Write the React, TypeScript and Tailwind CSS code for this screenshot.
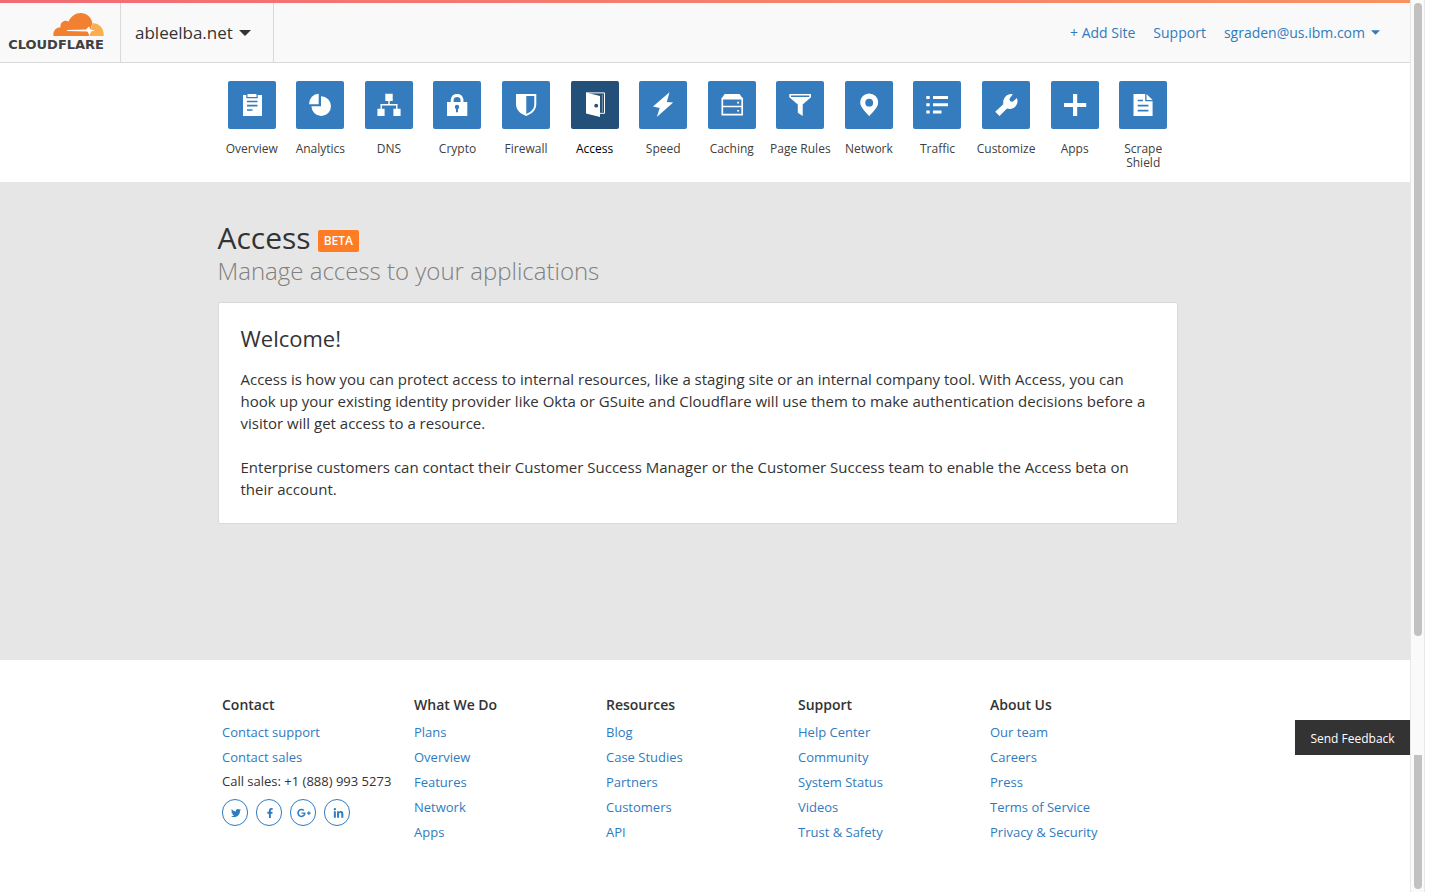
import type { ReactNode } from "react";
import { FaFacebookF, FaGooglePlusG, FaLinkedinIn, FaTwitter } from "react-icons/fa";

const BLUE = "#347cbd";

function Caret({ className }: { className: string }) {
  return (
    <svg viewBox="0 0 12 6" className={className} aria-hidden="true">
      <path d="M0 0h12L6 6z" fill="currentColor" />
    </svg>
  );
}

function Logo() {
  return (
    <a href="#home" aria-label="Cloudflare home" className="flex w-[104px] flex-col items-end text-[#404041]">
      <svg viewBox="0 0 51 23" className="h-[23px] w-[51px]" aria-hidden="true">
        <path
          d="M0.5 23C-0.3 18 3 14.3 7.6 14.2C6.6 9.8 11.4 6 15.6 8.6C18 3 22.6 0 27.6 0C34 0 38.6 4.5 39.4 10.3C37.8 15 36.6 20 35.6 23Z"
          fill="#f18030"
        />
        <path d="M36 23L39.6 10.3C46 9.8 51.4 15.6 50.6 23Z" fill="#fbad50" />
        <path
          d="M14 17.1L33 16.6L36.2 13.2L37.2 16.4L42 17.6L38 18.6L36.6 22.6L34.4 18.6L14 17.9Z"
          fill="#fff"
        />
      </svg>
      <span className="pt-0.5 font-['DejaVu_Sans',sans-serif] text-[13px] leading-[14px] font-bold">CLOUDFLARE</span>
    </a>
  );
}

type NavItem = { label: string; icon: ReactNode; active?: boolean };

const NAV: NavItem[] = [
  {
    label: "Overview",
    icon: (
      <>
        <path d="M15 14h19v21H15z" />
        <path d="M18.3 12.5h11.4v4.8H18.3z" fill={BLUE} />
        <path d="M19.5 13h9v3h-9z" />
        <path d="M19 20.500h10.5M19 24.600h10.5M19 29h5.5" stroke={BLUE} strokeWidth="1.700" />
      </>
    ),
  },
  {
    label: "Analytics",
    icon: (
      <>
        <path d="M22.7 23.2H13a9.7 10.5 0 0 1 9.7-10.5z" />
        <path d="M25 15.3a9.8 9.8 0 1 1-9.6 10H25z" />
      </>
    ),
  },
  {
    label: "DNS",
    icon: (
      <>
        <path d="M20.3 12.8h7.4V20h-7.4zM12.4 27.7h7.2V35h-7.2zM28.4 27.7h7.2V35h-7.2z" />
        <path d="M24 20v4M16.2 28v-4.2h15.6V28" fill="none" stroke="#fff" strokeWidth="1.4" />
      </>
    ),
  },
  {
    label: "Crypto",
    icon: (
      <>
        <path d="M14 21h20.3v14H14z" />
        <path d="M19.2 21.5v-3a5 5 0 0 1 9.8 0v3" fill="none" stroke="#fff" strokeWidth="2.9" />
        <circle cx="24" cy="26" r="2.2" fill={BLUE} />
        <path d="M23 26h2v5.2h-2z" fill={BLUE} />
      </>
    ),
  },
  {
    label: "Firewall",
    icon: (
      <>
        <path d="M14 13h20.3v10c0 6.500-4.500 9.700-10.100 12C18.500 32.700 14 29.500 14 23z" />
        <path d="M24.300 14.900h8V23c0 5.200-3.300 7.700-8 9.900z" fill={BLUE} />
      </>
    ),
  },
  {
    label: "Access",
    active: true,
    icon: (
      <>
        <path d="M15 11.500l14 3.600V36l-14-3.600z" />
        <path d="M15 11.900h18.500v20.400H29" fill="none" stroke="#fff" strokeWidth="1" />
        <path d="M31.400 13.500v17.500" stroke="#8fa9bf" strokeWidth="0.800" />
        <circle cx="25.200" cy="24.700" r="1.900" fill="#225079" />
      </>
    ),
  },
  {
    label: "Speed",
    icon: <path d="M30.500 11.300L14 25.500l6.700 1.500L17.800 36 34.200 21.600l-6.400-.7z" />,
  },
  {
    label: "Caching",
    icon: (
      <>
        <path d="M16.600 13h15l3 4.500h-21z" />
        <path d="M14.300 17.600h19.900v16H14.300zM14.300 25.500h19.900" fill="none" stroke="#fff" strokeWidth="1.700" />
        <path d="M29.200 20.800h1.900v1.700h-1.900zM29.200 28.900h1.900v1.700h-1.900z" />
      </>
    ),
  },
  {
    label: "Page Rules",
    icon: (
      <>
        <path d="M13.300 13H35v3.200l-8.300 7.300V35l-4.900-3.300v-8.200l-8.500-7.300z" />
        <path d="M15 14.500h18.300v1.500H15z" fill={BLUE} />
      </>
    ),
  },
  {
    label: "Network",
    icon: (
      <>
        <path d="M24.200 35.200C20.600 30.600 15.200 26.200 15.200 21.400a9 9 0 0 1 18 0c0 4.800-5.400 9.200-9 13.800z" />
        <circle cx="24.200" cy="21.700" r="3.900" fill={BLUE} />
      </>
    ),
  },
  {
    label: "Traffic",
    icon: (
      <path d="M13.300 14.900h3.400V18h-3.400zM13.300 22.200h3.400v3.100h-3.400zM13.300 29.500h3.400v3.100h-3.400zM20 14.900h15V18H20zM20 22.200h15v3.100H20zM20 29.500h8.500v3.100H20z" />
    ),
  },
  {
    label: "Customize",
    icon: (
      <path d="M30.800 13.300L27.500 17.700L28 20.200L30.700 20.700L34.900 17C36.500 20.400 35 25 31.500 27C29 28.400 26.700 28.200 25 27.600L17.500 35L13.200 30.800L21.300 23.200C20.300 18 24.800 12 30.800 13.300Z" />
    ),
  },
  { label: "Apps", icon: <path d="M22 13h4.200v8.900h9v4.200h-9v9H22v-9h-9v-4.200h9z" /> },
  {
    label: "Scrape Shield",
    icon: (
      <>
        <path d="M14.500 13h11.700v7.200h7.400V35H14.500zM27.500 13l6.100 6.100h-6.100z" />
        <path d="M18.700 19.500H24M18.700 24.600h10.700M18.700 29.600h10.700" stroke={BLUE} strokeWidth="1.700" />
      </>
    ),
  },
];

const FOOTER = [
  { title: "Contact", links: ["Contact support", "Contact sales"] },
  { title: "What We Do", links: ["Plans", "Overview", "Features", "Network", "Apps"] },
  { title: "Resources", links: ["Blog", "Case Studies", "Partners", "Customers", "API"] },
  { title: "Support", links: ["Help Center", "Community", "System Status", "Videos", "Trust & Safety"] },
  { title: "About Us", links: ["Our team", "Careers", "Press", "Terms of Service", "Privacy & Security"] },
];

const SOCIAL = [
  { name: "Twitter", icon: <FaTwitter size={10} /> },
  { name: "Facebook", icon: <FaFacebookF size={10} /> },
  { name: "Google Plus", icon: <FaGooglePlusG size={14} /> },
  { name: "LinkedIn", icon: <FaLinkedinIn size={11} /> },
];

function Header() {
  return (
    <header>
      <div className="h-[3px] bg-linear-to-r from-[#f16b75] to-[#f79261]" />
      <div className="flex h-[60px] items-stretch border-b border-[#d9d9d9] bg-[#f9f9f9] pr-[30px]">
        <div className="flex w-[121px] items-start border-r border-[#d9d9d9] pt-2.5">
          <Logo />
        </div>
        <button type="button" className="flex items-center gap-1.5 border-r border-[#d9d9d9] pr-[22px] pl-3.5 text-[17px] text-[#333]">
          ableelba.net
          <Caret className="h-1.5 w-3" />
        </button>
        <div className="ml-auto flex items-center gap-[18px] text-sm text-[#2f7bbf]">
          <a href="#add-site">+ Add Site</a>
          <a href="#support">Support</a>
          <button type="button" className="flex items-center gap-1.5">
            sgraden@us.ibm.com
            <Caret className="h-[5px] w-[9px]" />
          </button>
        </div>
      </div>
    </header>
  );
}

function Navigation() {
  return (
    <nav aria-label="Site settings" className="pr-[15px]">
      <ul className="mx-auto grid max-w-[960px] grid-cols-14 pt-[18px] pb-3">
        {NAV.map((item) => (
          <li key={item.label}>
            <a
              href={"#" + item.label.toLowerCase().replace(" ", "-")}
              aria-current={item.active ? "page" : undefined}
              className={
                "flex flex-col items-center gap-[13px] text-center text-xs leading-[14px] " +
                (item.active ? "text-black" : "text-[#404040]")
              }
            >
              <svg
                viewBox="0 0 48 48"
                fill="#fff"
                aria-hidden="true"
                className={"size-12 rounded-xs " + (item.active ? "bg-[#225079]" : "bg-[#347cbd]")}
              >
                {item.icon}
              </svg>
              <span className={item.label === "Page Rules" ? "whitespace-nowrap" : ""}>{item.label}</span>
            </a>
          </li>
        ))}
      </ul>
    </nav>
  );
}

function AccessPage() {
  return (
    <main className="min-h-[478px] bg-[#e6e6e6] pr-[15px]">
      <div className="mx-auto max-w-[960px] pt-[38px]">
        <div className="flex items-center gap-[7px]">
          <h1 className="text-[30px] leading-9 text-[#333]">Access</h1>
          <span className="mt-1.5 rounded-xs bg-[#ff7b24] px-1.5 text-xs leading-[22px] font-semibold text-white">BETA</span>
        </div>
        <p className="text-2xl leading-[30px] font-light text-[#808080]">Manage access to your applications</p>
        <section className="mt-4 rounded-xs border border-[#dadada] bg-white px-[22px] pt-[21px] pb-[23px] text-[15px] leading-[22px] text-[#333]">
          <h2 className="mb-4 text-[22px] leading-7">Welcome!</h2>
          <p>
            Access is how you can protect access to internal resources, like a staging site or an internal company tool.
            With Access, you can hook up your existing identity provider like Okta or GSuite and Cloudflare will use them
            to make authentication decisions before a visitor will get access to a resource.
          </p>
          <p className="mt-[22px]">
            Enterprise customers can contact their Customer Success Manager or the Customer Success team to enable the
            Access beta on their account.
          </p>
        </section>
      </div>
    </main>
  );
}

function Footer() {
  return (
    <footer className="pr-3.5 text-[13px] text-[#2f7bbf]">
      <div className="mx-auto grid max-w-[960px] grid-cols-5 pt-[35px]">
        {FOOTER.map((column) => (
          <section key={column.title} className="pl-1">
            <h3 className="mb-[5px] text-sm leading-5 font-semibold text-[#333]">{column.title}</h3>
            <ul className="leading-[25px]">
              {column.links.map((link) => (
                <li key={link}>
                  <a href={"#" + link.toLowerCase().replaceAll(" ", "-")}>{link}</a>
                </li>
              ))}
            </ul>
            {column.title === "Contact" && (
              <>
                <p className="mb-[7px] leading-[22px] whitespace-nowrap text-[#333]">Call sales: +1 (888) 993 5273</p>
                <div className="flex gap-2">
                  {SOCIAL.map((network) => (
                    <a
                      key={network.name}
                      href={"#" + network.name.toLowerCase().replace(" ", "-")}
                      aria-label={network.name}
                      className="flex h-[27px] w-[26px] items-center justify-center rounded-full border border-[#2f7bbf] pt-px pl-0.5"
                    >
                      {network.icon}
                    </a>
                  ))}
                </div>
              </>
            )}
          </section>
        ))}
      </div>
    </footer>
  );
}

export default function App() {
  return (
    <div className="flex min-h-screen bg-white pr-1.5 font-['Open_Sans',sans-serif]">
      <div className="min-w-0 flex-1">
        <Header />
        <Navigation />
        <AccessPage />
        <Footer />
      </div>
      <div aria-hidden="true" className="mb-0.5 flex w-[15px] flex-col border-x border-[#e8e8e8] bg-[#fafafa] px-[3px] pt-[3px] pb-[3px]">
        <div className="w-2 flex-[633] rounded-full bg-[#c1c1c1]" />
        <div className="flex-[119]" />
        <div className="w-2 flex-[134] rounded-b-full bg-[#c1c1c1]" />
      </div>
      <button
        type="button"
        className="fixed right-[21px] bottom-[139px] h-[35px] w-[115px] bg-[#333] pt-0.5 text-xs text-white"
      >
        Send Feedback
      </button>
    </div>
  );
}
